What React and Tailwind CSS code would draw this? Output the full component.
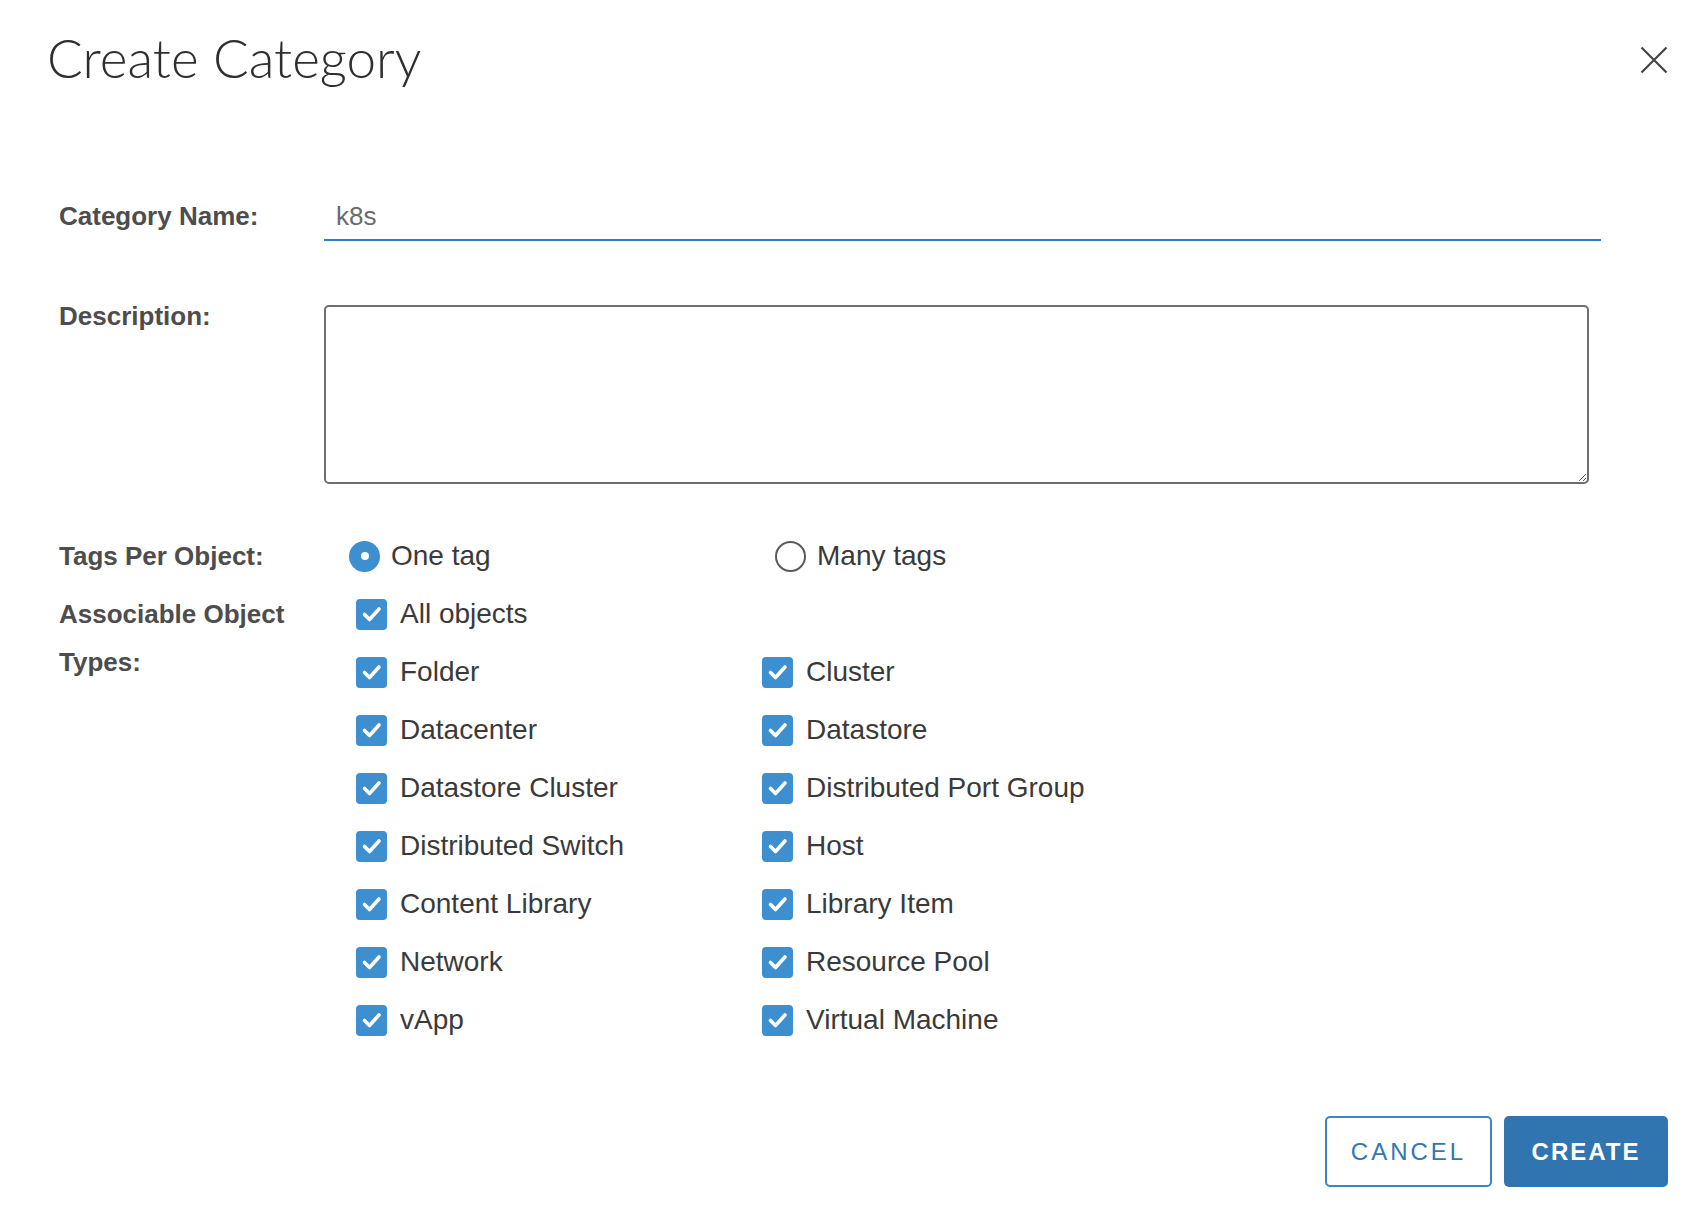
import { useState } from 'react';

const LEFT_ITEMS = ['Folder', 'Datacenter', 'Datastore Cluster', 'Distributed Switch', 'Content Library', 'Network', 'vApp'];
const RIGHT_ITEMS = ['Cluster', 'Datastore', 'Distributed Port Group', 'Host', 'Library Item', 'Resource Pool', 'Virtual Machine'];

const CheckBox = ({ label }) => (
  <div className="flex h-[58px] items-center gap-[13px]">
    <span className="flex h-[31px] w-[31px] shrink-0 items-center justify-center rounded-[4px] bg-[#3d8fcf]">
      <svg width="31" height="31" viewBox="0 0 31 31" fill="none">
        <polyline points="8.5,15.5 13.5,20.5 23,10" stroke="white" strokeWidth="3.6" strokeLinecap="round" strokeLinejoin="round" />
      </svg>
    </span>
    <span className="text-[28px] leading-none text-[#3a3a3a]">{label}</span>
  </div>
);

const Radio = ({ label, checked }) => (
  <div className="flex items-center gap-[11px]">
    {checked ? (
      <span className="flex h-[31px] w-[31px] items-center justify-center rounded-full bg-[#3d8fcf]">
        <span className="h-[8px] w-[8px] rounded-full bg-white" />
      </span>
    ) : (
      <span className="h-[31px] w-[31px] rounded-full border-2 border-[#5a5a5a] bg-white" />
    )}
    <span className="text-[28px] leading-none text-[#3a3a3a]">{label}</span>
  </div>
);

export default function App() {
  const [name, setName] = useState('k8s');

  return (
    <div className="min-h-[1226px] w-full bg-white font-['Liberation_Sans',Arial,sans-serif]">
      {/* Header */}
      <div className="flex h-[120px] items-center justify-between pl-[47px] pr-[40px]">
        <h1 className="pb-[5px] font-['Lato',sans-serif] text-[53px] font-light text-[#2f2f2f]">Create Category</h1>
        <button type="button" aria-label="Close" className="flex h-[28px] w-[28px] items-center justify-center">
          <svg width="28" height="28" viewBox="0 0 28 28" fill="none">
            <path d="M1.5 1.5 L26.5 26.5 M26.5 1.5 L1.5 26.5" stroke="#444" strokeWidth="2.2" />
          </svg>
        </button>
      </div>

      <div className="pl-[59px]">
        {/* Category name */}
        <div className="mt-[73px] grid grid-cols-[265px_1fr]">
          <label htmlFor="cat-name" className="self-center pb-[2px] text-[26px] font-bold text-[#4d4d4d]">
            Category Name:
          </label>
          <input
            id="cat-name"
            value={name}
            onChange={(e) => setName(e.target.value)}
            className="h-[48px] w-[1277px] border-b-2 border-[#2f7dbf] pl-[12px] text-[26px] text-[#6a6a6a] outline-none"
          />
        </div>

        {/* Description */}
        <div className="mt-[64px] grid grid-cols-[265px_1fr]">
          <label htmlFor="cat-desc" className="mt-[-3px] text-[26px] font-bold leading-[28px] text-[#4d4d4d]">
            Description:
          </label>
          <textarea
            id="cat-desc"
            className="h-[179px] w-[1265px] rounded-[5px] border-2 border-[#6e6e6e] p-2 text-[26px] outline-none"
          />
        </div>

        {/* Tags per object */}
        <div className="mt-[43px] grid h-[58px] grid-cols-[265px_1fr] items-center">
          <span className="text-[26px] font-bold text-[#4d4d4d]">Tags Per Object:</span>
          <div className="flex pl-[25px]">
            <div className="w-[426px]">
              <Radio label="One tag" checked />
            </div>
            <Radio label="Many tags" />
          </div>
        </div>

        {/* Associable object types */}
        <div className="grid grid-cols-[265px_1fr]">
          <span className="pt-[5px] text-[26px] font-bold leading-[48px] text-[#4d4d4d]">
            Associable Object
            <br />
            Types:
          </span>
          <div className="pl-[32px]">
            <CheckBox label="All objects" />
            <div className="grid w-[812px] grid-cols-2">
              <div>
                {LEFT_ITEMS.map((item) => (
                  <CheckBox key={item} label={item} />
                ))}
              </div>
              <div>
                {RIGHT_ITEMS.map((item) => (
                  <CheckBox key={item} label={item} />
                ))}
              </div>
            </div>
          </div>
        </div>
      </div>

      {/* Footer buttons */}
      <div className="mt-[67px] flex justify-end gap-[12px] pr-[40px]">
        <button
          type="button"
          className="h-[71px] w-[167px] rounded-[5px] border-2 border-[#3d85c4] bg-white text-[24px] tracking-[3px] text-[#3277b5]"
        >
          CANCEL
        </button>
        <button
          type="button"
          className="h-[71px] w-[164px] rounded-[5px] bg-[#3074b0] text-[24px] font-bold tracking-[2px] text-white"
        >
          CREATE
        </button>
      </div>
    </div>
  );
}
